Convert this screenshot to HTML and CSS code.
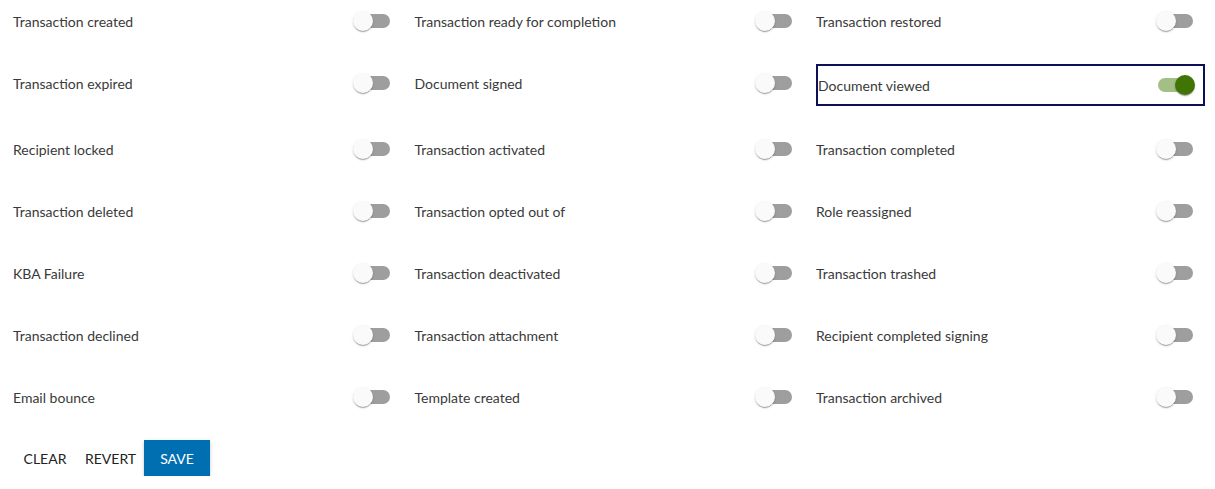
FILE: index.html
```html
<!DOCTYPE html>
<html>
<head>
<meta charset="utf-8">
<link rel="stylesheet" href="styles.css">
</head>
<body>
<div class="page">
  <div class="grid">
    <div class="item"><span class="label">Transaction created</span><span class="switch"><span class="track"></span><span class="thumb"></span></span></div>
    <div class="item"><span class="label">Transaction ready for completion</span><span class="switch"><span class="track"></span><span class="thumb"></span></span></div>
    <div class="item"><span class="label">Transaction restored</span><span class="switch"><span class="track"></span><span class="thumb"></span></span></div>

    <div class="item"><span class="label">Transaction expired</span><span class="switch"><span class="track"></span><span class="thumb"></span></span></div>
    <div class="item"><span class="label">Document signed</span><span class="switch"><span class="track"></span><span class="thumb"></span></span></div>
    <div class="item focused"><span class="label">Document viewed</span><span class="switch on"><span class="track"></span><span class="thumb"></span></span></div>

    <div class="item"><span class="label">Recipient locked</span><span class="switch"><span class="track"></span><span class="thumb"></span></span></div>
    <div class="item"><span class="label">Transaction activated</span><span class="switch"><span class="track"></span><span class="thumb"></span></span></div>
    <div class="item"><span class="label">Transaction completed</span><span class="switch"><span class="track"></span><span class="thumb"></span></span></div>

    <div class="item"><span class="label">Transaction deleted</span><span class="switch"><span class="track"></span><span class="thumb"></span></span></div>
    <div class="item"><span class="label">Transaction opted out of</span><span class="switch"><span class="track"></span><span class="thumb"></span></span></div>
    <div class="item"><span class="label">Role reassigned</span><span class="switch"><span class="track"></span><span class="thumb"></span></span></div>

    <div class="item"><span class="label">KBA Failure</span><span class="switch"><span class="track"></span><span class="thumb"></span></span></div>
    <div class="item"><span class="label">Transaction deactivated</span><span class="switch"><span class="track"></span><span class="thumb"></span></span></div>
    <div class="item"><span class="label">Transaction trashed</span><span class="switch"><span class="track"></span><span class="thumb"></span></span></div>

    <div class="item"><span class="label">Transaction declined</span><span class="switch"><span class="track"></span><span class="thumb"></span></span></div>
    <div class="item"><span class="label">Transaction attachment</span><span class="switch"><span class="track"></span><span class="thumb"></span></span></div>
    <div class="item"><span class="label">Recipient completed signing</span><span class="switch"><span class="track"></span><span class="thumb"></span></span></div>

    <div class="item"><span class="label">Email bounce</span><span class="switch"><span class="track"></span><span class="thumb"></span></span></div>
    <div class="item"><span class="label">Template created</span><span class="switch"><span class="track"></span><span class="thumb"></span></span></div>
    <div class="item"><span class="label">Transaction archived</span><span class="switch"><span class="track"></span><span class="thumb"></span></span></div>
  </div>
  <div class="actions">
    <button class="btn text">CLEAR</button>
    <button class="btn text">REVERT</button>
    <button class="btn primary">SAVE</button>
  </div>
</div>
</body>
</html>
```

FILE: styles.css
```css
html, body {
  margin: 0;
  padding: 0;
  background: #ffffff;
}

body {
  font-family: Lato, "Open Sans", Arial, sans-serif;
  font-size: 14px;
  color: #3a3a3a;
}

.page {
  padding: 2px 0 0 13px;
}

.grid {
  display: grid;
  grid-template-columns: repeat(3, 389px);
  column-gap: 12.5px;
  row-gap: 24px;
  align-items: start;
}

.item {
  height: 38px;
  display: flex;
  align-items: center;
  justify-content: space-between;
  box-sizing: border-box;
}

.item.focused {
  height: 42px;
  border: 2px solid #0c1157;
}

.label {
  line-height: 20px;
  padding-top: 1px;
}

.switch {
  position: relative;
  width: 58px;
  height: 38px;
  flex: none;
}

.item.focused .switch {
  margin-right: -1px;
}

.track {
  position: absolute;
  left: 12px;
  top: 12px;
  width: 34px;
  height: 14px;
  border-radius: 7px;
  background: #9e9e9e;
}

.thumb {
  position: absolute;
  left: 9px;
  top: 9px;
  width: 20px;
  height: 20px;
  border-radius: 50%;
  background: #fafafa;
  box-shadow: 0 2px 1px -1px rgba(0,0,0,0.2), 0 1px 1px 0 rgba(0,0,0,0.14), 0 1px 3px 0 rgba(0,0,0,0.12);
}

.switch.on .track {
  background: #a2bf86;
}

.switch.on .thumb {
  left: 29px;
  background: #407505;
}

.actions {
  display: flex;
  align-items: center;
  margin-top: 24px;
}

.btn {
  font-family: Lato, "Open Sans", Arial, sans-serif;
  font-size: 14px;
  height: 36px;
  border: none;
  border-radius: 0;
  cursor: pointer;
  margin: 0;
}

.btn.text {
  background: transparent;
  color: #222222;
  padding: 0 8px;
  min-width: 64px;
}

.btn.primary {
  background: #006fb2;
  color: #ffffff;
  padding: 0 16px;
  min-width: 64px;
  box-shadow: 0 3px 1px -2px rgba(0,0,0,0.2), 0 2px 2px 0 rgba(0,0,0,0.14), 0 1px 5px 0 rgba(0,0,0,0.12);
}
```
